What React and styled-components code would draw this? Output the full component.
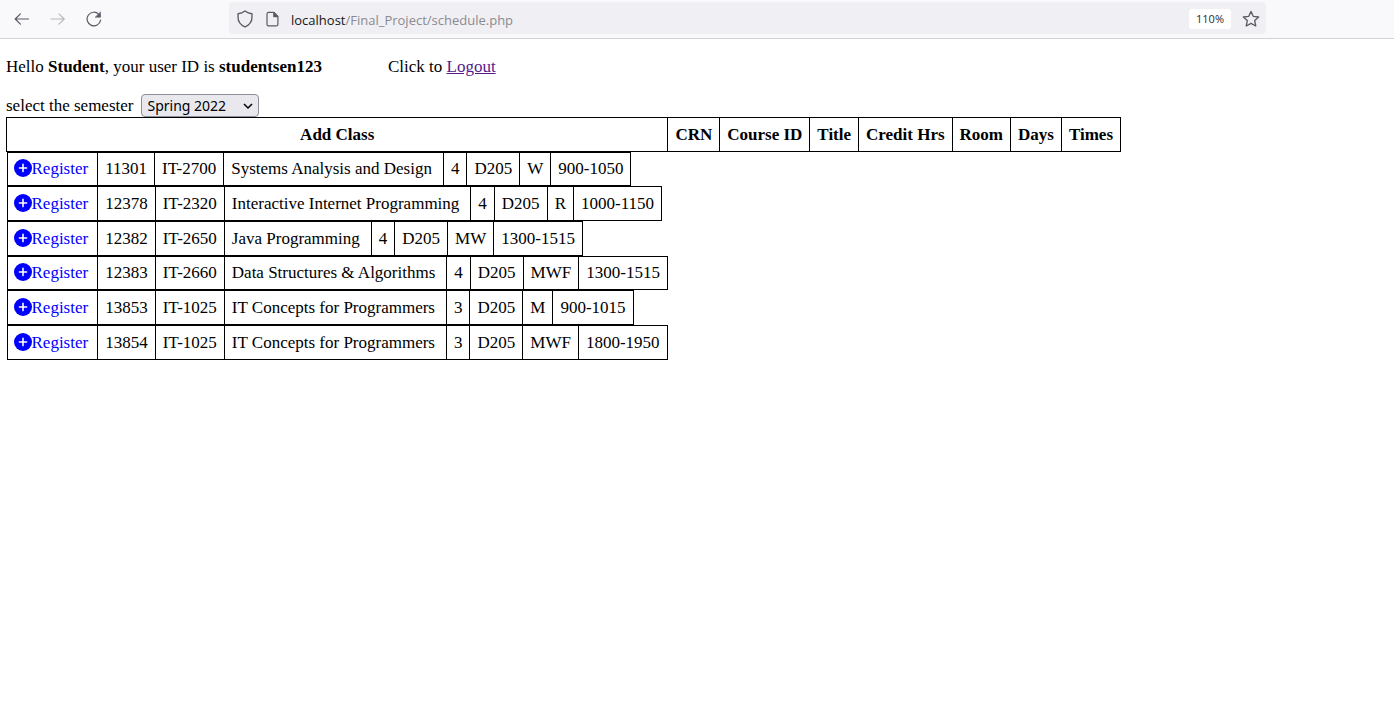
import React from "react";
import styled, { createGlobalStyle } from "styled-components";

const GlobalStyle = createGlobalStyle`
  *, *::before, *::after { box-sizing: border-box; }
  body {
    margin: 0;
    background: #fff;
    color: #000;
    font: 17px/20px "Liberation Serif", "Times New Roman", serif;
  }
`;

const BrowserBar = styled.header`
  display: flex;
  align-items: flex-start;
  height: 39px;
  padding: 2px 128px 0 12px;
  background: #f9f9fb;
  border-bottom: 1px solid #d2d2d6;
`;

const NavButtons = styled.nav`
  display: flex;
  flex: none;
  gap: 16px;
  width: 217px;
  padding-top: 7px;
`;

const IconButton = styled.button`
  display: flex;
  align-items: center;
  justify-content: center;
  flex: none;
  width: 20px;
  height: 20px;
  padding: 0;
  border: 0;
  background: none;
  color: #5b5b66;
  opacity: ${(p) => (p.disabled ? 0.4 : 1)};
`;

const AddressBar = styled.div`
  display: flex;
  align-items: center;
  flex: 1;
  min-width: 0;
  height: 32px;
  padding: 1px 5px 0 6px;
  gap: 8px;
  border-radius: 4px;
  background: #f0f0f4;
`;

const Address = styled.div`
  flex: 1;
  min-width: 0;
  overflow: hidden;
  white-space: nowrap;
  padding-top: 2px;
  font: 13px/20px "Open Sans", "Noto Sans", sans-serif;
  color: #8a8a90;
`;

const Host = styled.span`
  color: #15141a;
`;

const ZoomLevel = styled.button`
  width: 42px;
  height: 20px;
  margin-right: 2px;
  padding: 0;
  border: 0;
  border-radius: 3px;
  background: #fff;
  color: #2b2a33;
  font: 11px/20px "Open Sans", "Noto Sans", sans-serif;
`;

const Page = styled.main`
  padding: 18px 6px;
`;

const Greeting = styled.p`
  display: flex;
  gap: 66px;
  margin: 0 0 17px;
`;

const LogoutLink = styled.a`
  color: #551a8b;
`;

const SemesterForm = styled.form`
  display: flex;
  align-items: center;
  gap: 8px;
`;

const SelectBox = styled.span`
  position: relative;
  display: inline-flex;

  svg {
    position: absolute;
    right: 6px;
    top: 7px;
    pointer-events: none;
  }
`;

const Select = styled.select`
  appearance: none;
  width: 118px;
  height: 23px;
  padding: 0 5px;
  border: 1px solid #8f8f9d;
  border-radius: 4px;
  background: #e9e9ed;
  color: #000;
  font: 14px/20px "Noto Sans", sans-serif;
`;

const ScheduleTable = styled.table`
  border-collapse: collapse;
  white-space: nowrap;
`;

const HeadCell = styled.th`
  height: 34px;
  padding: 0 7px;
  border: 1px solid #000;
`;

const RowHolder = styled.td`
  padding: 0;
`;

const ClassTable = styled.table`
  border-collapse: collapse;
  height: ${(p) => (p.$compact ? 34 : 35)}px;
`;

const ClassCell = styled.td`
  padding: 0 7px;
  border: 1px solid #000;
`;

const ActionCell = styled(ClassCell)`
  padding: 0 9px 0 6px;
`;

const TitleCell = styled(ClassCell)`
  padding-right: 11px;
`;

const RegisterLink = styled.a`
  display: flex;
  align-items: center;
  color: #00f;
  text-decoration: none;

  svg {
    margin-bottom: 2px;
  }
`;

const Icon = ({ size = 16, children }) => (
  <svg
    width={size}
    height={size}
    viewBox="0 0 16 16"
    fill="none"
    stroke="currentColor"
    strokeWidth="1.2"
    strokeLinecap="round"
    strokeLinejoin="round"
    aria-hidden="true"
  >
    {children}
  </svg>
);

const PlusIcon = () => (
  <svg width="18" height="18" viewBox="0 0 18 18" aria-hidden="true">
    <circle cx="9" cy="9" r="9" fill="#00f" />
    <path d="M9 5.4v7.2M5.4 9h7.2" stroke="#fff" strokeWidth="1.6" strokeLinecap="round" />
  </svg>
);

const headings = ["Add Class", "CRN", "Course ID", "Title", "Credit Hrs", "Room", "Days", "Times"];

const classes = [
  { crn: "11301", course: "IT-2700", title: "Systems Analysis and Design", hours: 4, room: "D205", days: "W", times: "900-1050" },
  { crn: "12378", course: "IT-2320", title: "Interactive Internet Programming", hours: 4, room: "D205", days: "R", times: "1000-1150" },
  { crn: "12382", course: "IT-2650", title: "Java Programming", hours: 4, room: "D205", days: "MW", times: "1300-1515" },
  { crn: "12383", course: "IT-2660", title: "Data Structures & Algorithms", hours: 4, room: "D205", days: "MWF", times: "1300-1515" },
  { crn: "13853", course: "IT-1025", title: "IT Concepts for Programmers", hours: 3, room: "D205", days: "M", times: "900-1015" },
  { crn: "13854", course: "IT-1025", title: "IT Concepts for Programmers", hours: 3, room: "D205", days: "MWF", times: "1800-1950" },
];

export default function App() {
  return (
    <>
      <GlobalStyle />
      <BrowserBar>
        <NavButtons aria-label="Browser navigation">
          <IconButton aria-label="Back">
            <Icon><path d="M14.5 8H1.2M6.4 2.8 1.2 8l5.2 5.2" /></Icon>
          </IconButton>
          <IconButton aria-label="Forward" disabled>
            <Icon><path d="M1 8h13.2M9 2.8 14.2 8 9 13.2" /></Icon>
          </IconButton>
          <IconButton aria-label="Reload">
            <Icon>
              <path d="M14.6 9.2A6.8 6.8 0 1 1 12.8 3.3" />
              <path d="M14.5 1.2v5H9.5z" fill="currentColor" strokeWidth="0.6" />
            </Icon>
          </IconButton>
        </NavButtons>
        <AddressBar>
          <IconButton aria-label="Tracking protection">
            <Icon size={18}>
              <path d="M8 .9C9.8 2.3 12 3.1 14.2 3.3V6.5c0 3.9-2.4 6.9-6.2 8.6-3.8-1.7-6.2-4.7-6.2-8.6V3.3C4 3.1 6.2 2.3 8 .9z" />
            </Icon>
          </IconButton>
          <IconButton aria-label="Site information">
            <Icon>
              <path d="M3.4 1.4h5.6l3.9 3.9v8.1a1.4 1.4 0 0 1-1.4 1.4H3.4A1.4 1.4 0 0 1 2 13.4V2.8a1.4 1.4 0 0 1 1.4-1.4z" />
              <path d="M8.8 1.6v4h4z" fill="currentColor" />
            </Icon>
          </IconButton>
          <Address><Host>localhost</Host>/Final_Project/schedule.php</Address>
          <ZoomLevel>110%</ZoomLevel>
          <IconButton aria-label="Bookmark this page">
            <Icon size={18}>
              <path d="m8 1.3 2 4.3 4.8.6-3.5 3.2.9 4.8L8 11.9l-4.2 2.3.9-4.8L1.2 6.2 6 5.6z" />
            </Icon>
          </IconButton>
        </AddressBar>
      </BrowserBar>
      <Page>
        <Greeting>
          <span>Hello <b>Student</b>, your user ID is <b>studentsen123</b></span>
          <span>Click to <LogoutLink href="#logout">Logout</LogoutLink></span>
        </Greeting>
        <SemesterForm>
          <label htmlFor="semester">select the semester</label>
          <SelectBox>
            <Select id="semester" defaultValue="Spring 2022">
              <option>Spring 2022</option>
            </Select>
            <svg width="10" height="10" viewBox="0 0 10 10" fill="none" aria-hidden="true">
              <path d="m1 3 4 4 4-4" stroke="#000" strokeWidth="1.5" />
            </svg>
          </SelectBox>
        </SemesterForm>
        <ScheduleTable>
          <thead>
            <tr>
              {headings.map((heading) => (
                <HeadCell key={heading} scope="col">{heading}</HeadCell>
              ))}
            </tr>
          </thead>
          <tbody>
            {classes.map((item, i) => (
              <tr key={item.crn}>
                <RowHolder>
                  <ClassTable $compact={i % 3 === 0}>
                    <tbody>
                      <tr>
                        <ActionCell>
                          <RegisterLink href="#register"><PlusIcon />Register</RegisterLink>
                        </ActionCell>
                        <ClassCell>{item.crn}</ClassCell>
                        <ClassCell>{item.course}</ClassCell>
                        <TitleCell>{item.title}</TitleCell>
                        <ClassCell>{item.hours}</ClassCell>
                        <ClassCell>{item.room}</ClassCell>
                        <ClassCell>{item.days}</ClassCell>
                        <ClassCell>{item.times}</ClassCell>
                      </tr>
                    </tbody>
                  </ClassTable>
                </RowHolder>
              </tr>
            ))}
          </tbody>
        </ScheduleTable>
      </Page>
    </>
  );
}
